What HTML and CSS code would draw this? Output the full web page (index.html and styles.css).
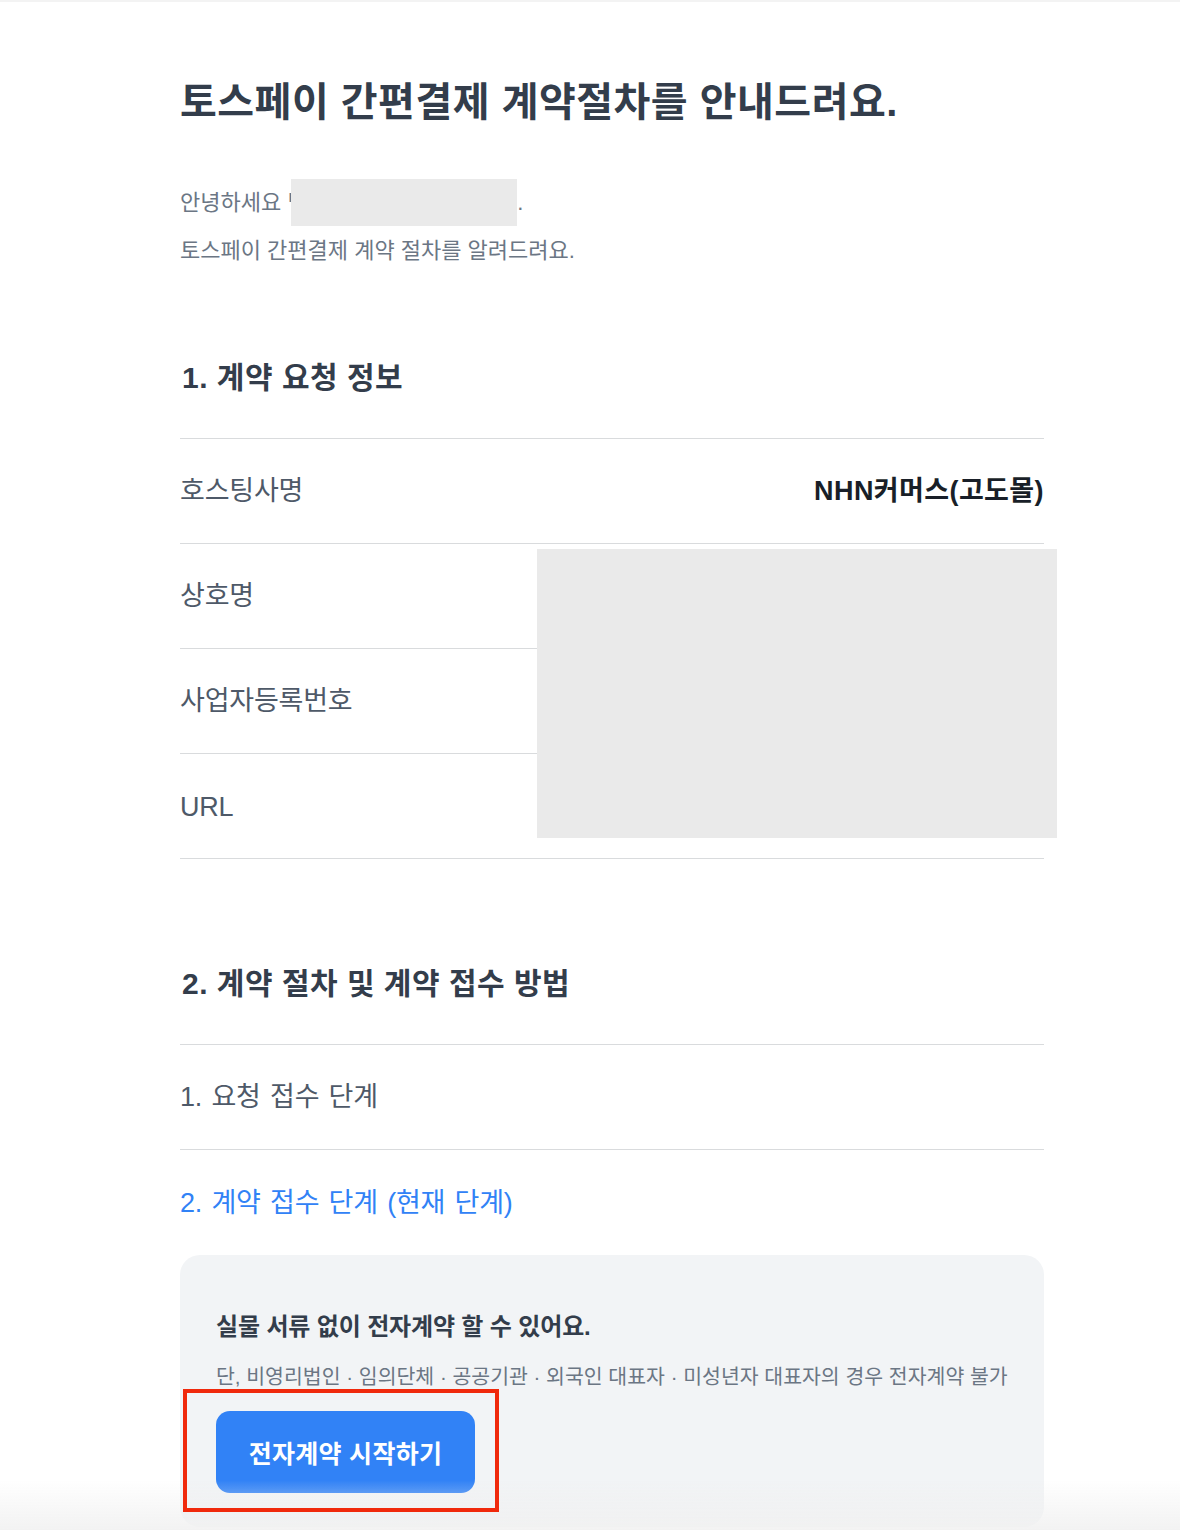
FILE: index.html
```html
<!DOCTYPE html>
<html lang="ko">
<head>
<meta charset="utf-8">
<title>토스페이 간편결제 계약절차</title>
<link rel="stylesheet" href="styles.css">
</head>
<body>
<div class="topline"></div>
<main class="page">
  <h1 class="title">토스페이 간편결제 계약절차를 안내드려요.</h1>
  <div class="greeting">
    <p class="greet-line">안녕하세요 <span class="masked">님께<span class="mask"></span></span>.</p>
    <p class="greet-line">토스페이 간편결제 계약 절차를 알려드려요.</p>
  </div>

  <section class="section">
    <h2 class="section-title">1. 계약 요청 정보</h2>
    <div class="info-table">
      <div class="row">
        <span class="label">호스팅사명</span>
        <span class="value">NHN커머스(고도몰)</span>
      </div>
      <div class="row"><span class="label">상호명</span></div>
      <div class="row"><span class="label">사업자등록번호</span></div>
      <div class="row"><span class="label label-latin">URL</span></div>
      <div class="table-mask"></div>
    </div>
  </section>

  <section class="section section-2">
    <h2 class="section-title">2. 계약 절차 및 계약 접수 방법</h2>
    <div class="steps">
      <div class="row"><span class="label">1. 요청 접수 단계</span></div>
      <div class="row row-current"><span class="label current">2. 계약 접수 단계 (현재 단계)</span></div>
    </div>
    <div class="notice">
      <p class="notice-title">실물 서류 없이 전자계약 할 수 있어요.</p>
      <p class="notice-desc">단, 비영리법인 · 임의단체 · 공공기관 · 외국인 대표자 · 미성년자 대표자의 경우 전자계약 불가</p>
      <div class="btn-wrap">
        <button class="btn-primary" type="button">전자계약 시작하기</button>
        <span class="highlight"></span>
      </div>
    </div>
  </section>
</main>
<div class="bottom-fade"></div>
</body>
</html>
```
FILE: styles.css
```css
* { box-sizing: border-box; }
html, body { margin: 0; padding: 0; background: #ffffff; }
body {
  font-family: "Liberation Sans", "Noto Sans CJK KR", sans-serif;
  color: #333d4b;
  height: 1530px;
  overflow: hidden;
}
p, h1, h2 { margin: 0; }

.topline { height: 2px; background: #f3f3f3; }

.page {
  width: 864px;
  margin-left: 180px;
  padding-top: 74px;
}

.title {
  font-size: 40px;
  line-height: 52px;
  font-weight: 700;
  color: #333d4b;
  letter-spacing: 0.5px;
}

.greeting { margin-top: 51px; }
.greet-line {
  font-size: 22px;
  line-height: 48px;
  color: #6b7684;
}
.masked {
  position: relative;
  display: inline-block;
  width: 230px;
  height: 48px;
  vertical-align: top;
  overflow: hidden;
  white-space: nowrap;
}
.mask {
  position: absolute;
  left: 4px;
  top: 0;
  width: 226px;
  height: 47px;
  background: #eaeaea;
}

.section { margin-top: 83px; }
.section-2 { margin-top: 105px; }

.section-title {
  font-size: 30px;
  line-height: 40px;
  font-weight: 700;
  color: #333d4b;
  letter-spacing: 0.5px;
  margin-bottom: 40px;
  padding-left: 2px;
}

.info-table, .steps {
  position: relative;
  border-top: 1px solid #d9dbdd;
}

.row {
  height: 105px;
  display: flex;
  align-items: center;
  justify-content: space-between;
  padding-bottom: 5px;
  border-bottom: 1px solid #d9dbdd;
}
.row-current { border-bottom: 0; }

.label {
  font-size: 27px;
  color: #4e5968;
  letter-spacing: -0.2px;
  word-spacing: 2px;
}
.label-latin { padding-top: 8px; }
.label.current { color: #3182f6; }

.value {
  font-size: 27px;
  font-weight: 700;
  color: #191f28;
  letter-spacing: 0.4px;
}

.table-mask {
  position: absolute;
  left: 357px;
  top: 110px;
  width: 520px;
  height: 289px;
  background: #eaeaea;
}

.notice {
  background: #f2f4f6;
  border-radius: 20px;
  padding: 56px 36px 36px;
  height: 272px;
}
.notice-title {
  font-size: 24px;
  line-height: 32px;
  font-weight: 700;
  color: #333d4b;
  letter-spacing: -0.15px;
}
.notice-desc {
  margin-top: 20px;
  font-size: 20.5px;
  line-height: 28px;
  color: #6b7684;
  white-space: nowrap;
}
.btn-wrap {
  position: relative;
  margin-top: 20px;
  width: 259px;
}
.btn-primary {
  display: block;
  width: 259px;
  height: 82px;
  border: 0;
  border-radius: 14px;
  background: #3182f6;
  color: #ffffff;
  font-family: "Liberation Sans", "Noto Sans CJK KR", sans-serif;
  font-size: 25px;
  font-weight: 700;
  letter-spacing: 0.3px;
  padding: 0;
}
.highlight {
  position: absolute;
  z-index: 10;
  left: -33px;
  top: -22px;
  width: 316px;
  height: 123px;
  border: 4px solid #f0290c;
}

.bottom-fade {
  position: fixed;
  z-index: 5;
  left: 0;
  right: 0;
  bottom: 0;
  height: 50px;
  background: linear-gradient(to bottom, rgba(240,240,240,0), rgba(240,240,240,0.85));
  pointer-events: none;
}
```
